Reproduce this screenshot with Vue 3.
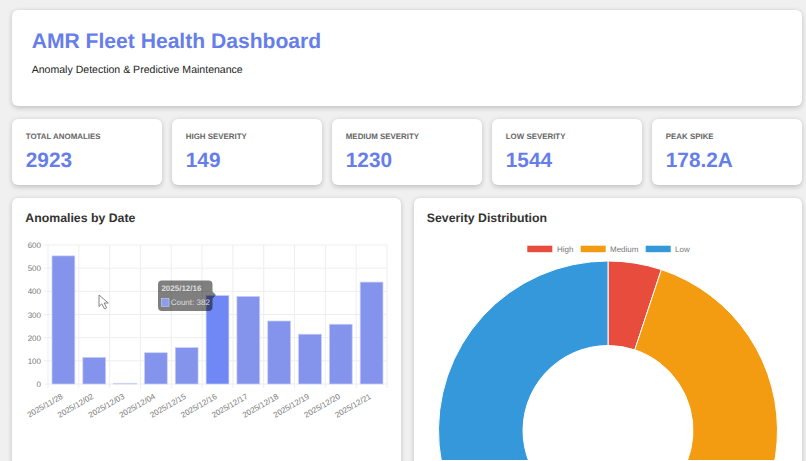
<script setup>
const stats = [
  { label: 'Total Anomalies', value: '2923' },
  { label: 'High Severity', value: '149' },
  { label: 'Medium Severity', value: '1230' },
  { label: 'Low Severity', value: '1544' },
  { label: 'Peak Spike', value: '178.2A' },
]

const dates = ['2025/11/28', '2025/12/02', '2025/12/03', '2025/12/04', '2025/12/15', '2025/12/16', '2025/12/17', '2025/12/18', '2025/12/19', '2025/12/20', '2025/12/21']
const counts = [553, 115, 3, 135, 157, 382, 378, 272, 215, 258, 440]

// plot area inside the bar chart svg
const left = 36
const right = 375
const top = 19
const bottom = 158
const step = (right - left) / dates.length
const ticks = [0, 100, 200, 300, 400, 500, 600]

const tickY = (v) => bottom - (v / 600) * (bottom - top)
const gridX = dates.map((_, i) => left + i * step).concat(right)
const bars = counts.map((c, i) => ({
  x: left + i * step + 4,
  y: tickY(c),
  w: step - 8,
  h: bottom - tickY(c),
  active: i === 5,
}))

// donut
const cx = 194
const cy = 204.5
const outer = 169.5
const inner = 85
const total = 2923

function pt(r, a) {
  const t = (a - 90) * Math.PI / 180
  return `${(cx + r * Math.cos(t)).toFixed(2)} ${(cy + r * Math.sin(t)).toFixed(2)}`
}

function slicePath(from, to) {
  const large = to - from > 180 ? 1 : 0
  return `M${pt(outer, from)} A${outer} ${outer} 0 ${large} 1 ${pt(outer, to)} L${pt(inner, to)} A${inner} ${inner} 0 ${large} 0 ${pt(inner, from)} Z`
}

const slices = []
let angle = 0
for (const s of [{ v: 149, c: '#e74c3c' }, { v: 1230, c: '#f39c12' }, { v: 1544, c: '#3498db' }]) {
  const next = angle + (s.v / total) * 360
  slices.push({ d: slicePath(angle, next), c: s.c })
  angle = next
}

const legend = [
  { label: 'High', c: '#e74c3c', x: 113.3, tx: 143 },
  { label: 'Medium', c: '#f39c12', x: 166.7, tx: 196 },
  { label: 'Low', c: '#3498db', x: 231.7, tx: 261 },
]
</script>

<template>
  <div class="page">
    <header class="header">
      <h1>AMR Fleet Health Dashboard</h1>
      <p>Anomaly Detection &amp; Predictive Maintenance</p>
    </header>

    <section class="stats">
      <div v-for="s in stats" :key="s.label" class="stat">
        <div class="stat-label">{{ s.label }}</div>
        <div class="stat-value">{{ s.value }}</div>
      </div>
    </section>

    <section class="charts">
      <div class="card">
        <h2>Anomalies by Date</h2>
        <svg class="chart" width="388" height="234" viewBox="0 0 388 234">
          <g stroke="#eeeeee" stroke-width="1">
            <line v-for="t in ticks" :key="t" :x1="left - 4" :x2="right" :y1="tickY(t)" :y2="tickY(t)" />
            <line v-for="x in gridX" :key="x" :x1="x" :x2="x" :y1="top" :y2="bottom + 4" />
          </g>
          <g class="tick">
            <text v-for="t in ticks" :key="t" :x="left - 7" :y="tickY(t) + 3" text-anchor="end">{{ t }}</text>
          </g>
          <rect
            v-for="(b, i) in bars"
            :key="i"
            :x="b.x"
            :y="b.y"
            :width="b.w"
            :height="b.h"
            :fill="b.active ? '#7088f5' : '#8494ec'"
            stroke="#c9d1f6"
            stroke-width="0.7"
          />
          <g class="tick">
            <text
              v-for="(d, i) in dates"
              :key="d"
              text-anchor="end"
              :transform="`translate(${left + i * step + step / 2} ${bottom + 14}) rotate(-30)`"
            >{{ d }}</text>
          </g>
          <path d="M150 54.500h46.500a4 4 0 0 1 4 4v7l3.500 3.500-3.500 3.500v8.500a4 4 0 0 1-4 4h-46.500a4 4 0 0 1-4-4v-22.500a4 4 0 0 1 4-4z" fill="#000" fill-opacity="0.5" />
          <text class="tip-title" x="149.400" y="64.700">2025/12/16</text>
          <rect x="149.400" y="72.700" width="7.600" height="7.600" fill="#8c9cf0" stroke="#c9d1f6" stroke-width="0.6" />
          <text class="tip-body" x="158.700" y="78.900">Count: 382</text>
          <path d="M87 69v11.500l2.800-2.600 2.700 5 2.200-1.100-2.600-4.800h4.200z" fill="#fff" stroke="#777" stroke-width="0.9" stroke-linejoin="round" />
        </svg>
      </div>

      <div class="card">
        <h2>Severity Distribution</h2>
        <svg class="chart" width="388" height="234" viewBox="0 0 388 234">
          <path v-for="s in slices" :key="s.c" :d="s.d" :fill="s.c" stroke="#fff" stroke-width="1" />
          <g v-for="l in legend" :key="l.label">
            <rect :x="l.x" y="19.700" width="25" height="6.500" :fill="l.c" />
            <text class="legend" :x="l.tx" y="25.500">{{ l.label }}</text>
          </g>
        </svg>
      </div>
    </section>
  </div>
</template>

<style>
html, body {
  margin: 0;
  background: #f0f0f0;
  overflow: hidden;
}
</style>

<style scoped>
.page {
  box-sizing: border-box;
  width: 806px;
  height: 461px;
  padding: 10px 3.7px 0 12.3px;
  overflow: hidden;
  background: #f0f0f0;
  font-family: "Liberation Sans", Arial, sans-serif;
  text-rendering: geometricPrecision;
}
.header {
  box-sizing: border-box;
  height: 96px;
  padding: 19px 19.4px;
  background: #fff;
  border-radius: 6px;
  box-shadow: 0 1.500px 5px rgba(0, 0, 0, 0.2);
}
h1 {
  margin: 0 0 8px;
  font-size: 21.1px;
  line-height: 26px;
  font-weight: 700;
  color: #667eea;
}
.header p {
  margin: 0;
  font-size: 10.55px;
  line-height: 14px;
  color: #222;
}
.stats {
  display: grid;
  grid-template-columns: repeat(5, 1fr);
  gap: 10px;
  margin-top: 13px;
}
.stat {
  box-sizing: border-box;
  height: 66px;
  padding: 13px 13.5px;
  background: #fff;
  border-radius: 6px;
  box-shadow: 0 1.500px 5px rgba(0, 0, 0, 0.2);
}
.stat-label {
  font-size: 7.9px;
  line-height: 10px;
  font-weight: 700;
  text-transform: uppercase;
  color: #666;
}
.stat-value {
  margin-top: 6px;
  font-size: 20.8px;
  line-height: 26px;
  font-weight: 700;
  color: #667eea;
}
.charts {
  display: grid;
  grid-template-columns: 1fr 1fr;
  gap: 13px;
  margin-top: 13px;
}
.card {
  height: 320px;
  background: #fff;
  border-radius: 6px;
  box-shadow: 0 1.500px 5px rgba(0, 0, 0, 0.2);
}
h2 {
  margin: 0;
  padding: 13px 13px 0;
  font-size: 12.3px;
  line-height: 15px;
  font-weight: 700;
  color: #333;
}
.chart {
  display: block;
  font-family: "Liberation Sans", Arial, sans-serif;
  text-rendering: geometricPrecision;
}
.tick text {
  font-size: 8px;
  fill: #777;
}
.legend {
  font-size: 8px;
  fill: #777;
}
.tip-title {
  font-size: 8px;
  font-weight: 700;
  fill: #ddd;
}
.tip-body {
  font-size: 8px;
  fill: #ddd;
}
</style>
